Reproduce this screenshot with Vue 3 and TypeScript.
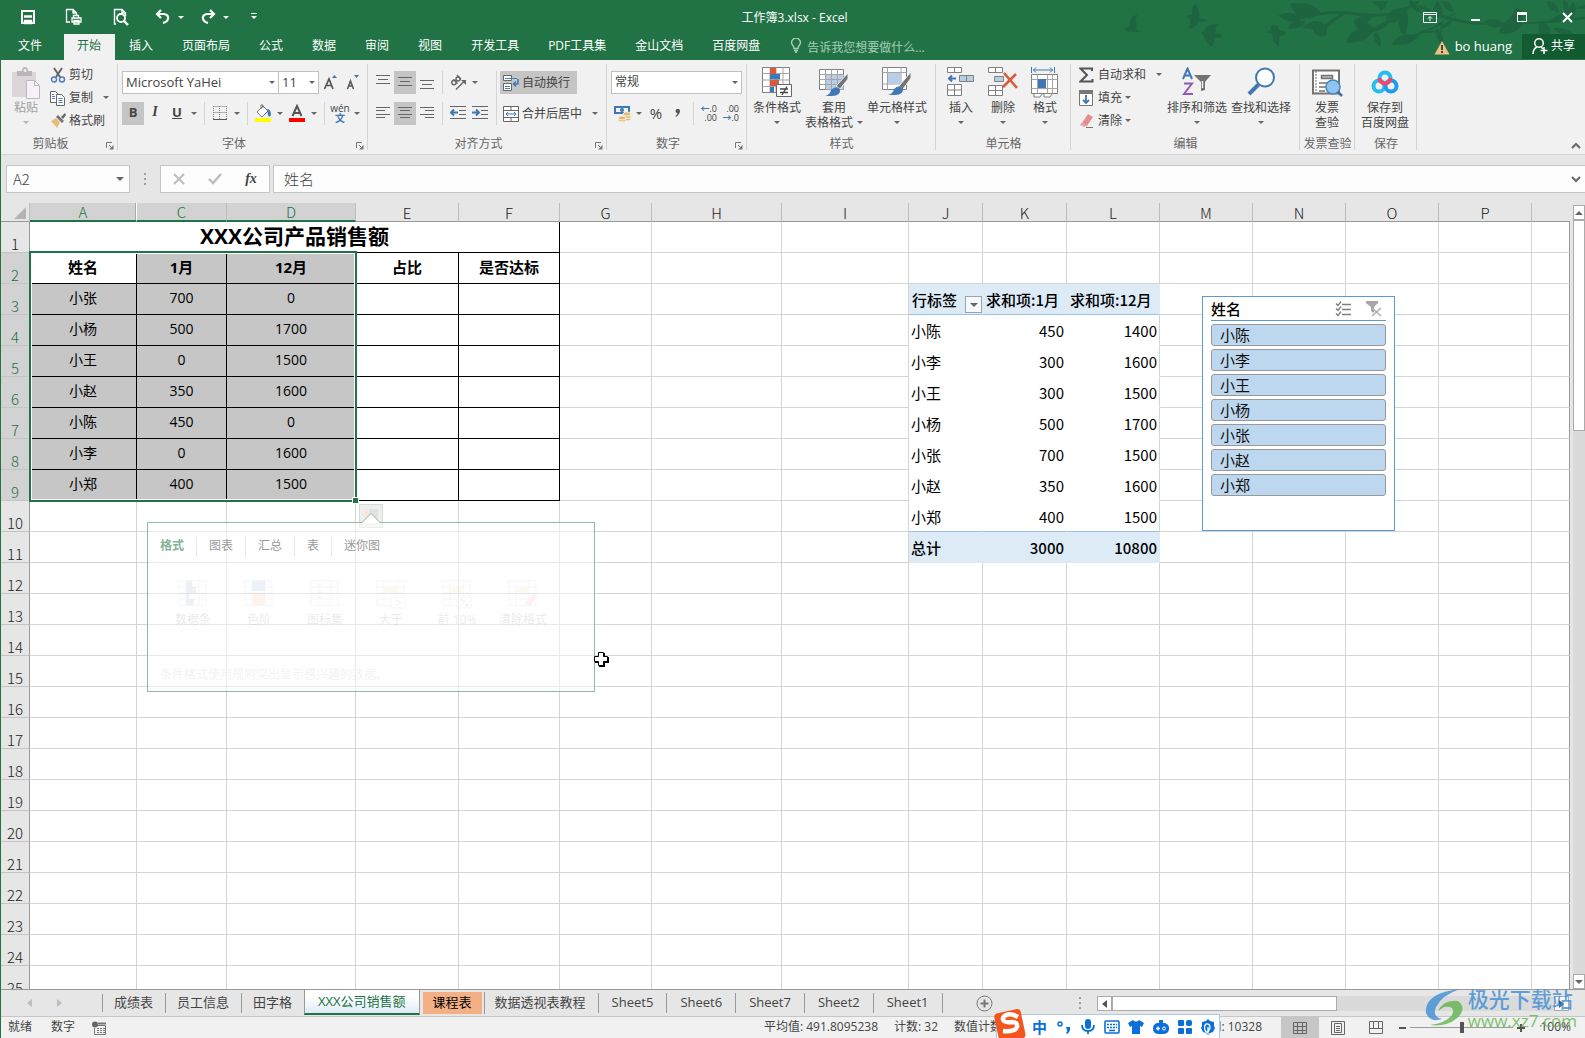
<script setup lang="ts">
import { ref } from 'vue'

interface Cell {
  text: string
  cls: string
  span?: number
}

const ribbonTabs = ['文件', '开始', '插入', '页面布局', '公式', '数据', '审阅', '视图', '开发工具', 'PDF工具集', '金山文档', '百度网盘']
const activeRibbon = ref('开始')

const columns = [
  { name: 'A', width: 107 },
  { name: 'C', width: 90 },
  { name: 'D', width: 129 },
  { name: 'E', width: 103 },
  { name: 'F', width: 101 },
  { name: 'G', width: 92 },
  { name: 'H', width: 130 },
  { name: 'I', width: 127 },
  { name: 'J', width: 74 },
  { name: 'K', width: 84 },
  { name: 'L', width: 93 },
  { name: 'M', width: 93 },
  { name: 'N', width: 93 },
  { name: 'O', width: 93 },
  { name: 'P', width: 93 },
  { name: '', width: 0 },
]
const selectedColumns = ['A', 'C', 'D']

const sales: string[][] = [
  ['姓名', '1月', '12月', '占比', '是否达标'],
  ['小张', '700', '0', '', ''],
  ['小杨', '500', '1700', '', ''],
  ['小王', '0', '1500', '', ''],
  ['小赵', '350', '1600', '', ''],
  ['小陈', '450', '0', '', ''],
  ['小李', '0', '1600', '', ''],
  ['小郑', '400', '1500', '', ''],
]

const pivot: string[][] = [
  ['行标签', '求和项:1月', '求和项:12月'],
  ['小陈', '450', '1400'],
  ['小李', '300', '1600'],
  ['小王', '300', '1500'],
  ['小杨', '500', '1700'],
  ['小张', '700', '1500'],
  ['小赵', '350', '1600'],
  ['小郑', '400', '1500'],
  ['总计', '3000', '10800'],
]

function buildRow(row: number): Cell[] {
  const cells: Cell[] = []
  columns.forEach((col, i) => {
    if (row === 1 && i < 5) {
      if (i === 0) cells.push({ text: 'XXX公司产品销售额', cls: 'sales title', span: 5 })
      return
    }
    if (row >= 2 && row <= 9 && i < 5) {
      const head = row === 2 ? ' head' : ''
      const picked = i < 3 && !(row === 2 && i === 0) ? ' picked' : ''
      cells.push({ text: sales[row - 2][i], cls: 'sales' + head + picked })
      return
    }
    if (row >= 3 && row <= 11 && i >= 8 && i <= 10) {
      const part = row === 3 ? ' phead' : row === 11 ? ' ptotal' : row === 10 ? ' plast' : ''
      cells.push({ text: pivot[row - 3][i - 8], cls: 'pivot' + part + (i > 8 ? ' num' : '') + (i === 10 ? ' edge' : '') })
      return
    }
    cells.push({ text: '', cls: '' })
  })
  return cells
}
const rows = Array.from({ length: 25 }, (_, i) => ({ n: i + 1, cells: buildRow(i + 1) }))

const slicerItems = ['小陈', '小李', '小王', '小杨', '小张', '小赵', '小郑']
const quickTabs = ['格式', '图表', '汇总', '表', '迷你图']
const quickItems = [
  { label: '数据条', kind: 'bars' },
  { label: '色阶', kind: 'scale' },
  { label: '图标集', kind: 'set' },
  { label: '大于', kind: 'greater' },
  { label: '前 10%', kind: 'percent' },
  { label: '清除格式', kind: 'clear' },
]
const sheets = ['成绩表', '员工信息', '田字格', 'XXX公司销售额', '课程表', '数据透视表教程', 'Sheet5', 'Sheet6', 'Sheet7', 'Sheet2', 'Sheet1']
const activeSheet = ref('XXX公司销售额')
</script>

<template>
  <div class="app">
    <header class="top">
      <svg class="branches" width="475" height="60" viewBox="0 0 1425 180" fill="#1e6440" aria-hidden="true">
        <path d="M42 86q16-2 18-20 2-18 22-22-8 18-2 30 2 8-2 14l16 6-20 2-12-2-8 4z" />
        <path d="M226 50l14-6 8 2q-6-26 8-34 14 18 12 34l-2 8 24 6-2 4-22 2q-12 18-30 20 6-14 4-24-2-10-14-12z" />
        <path d="M274 98l12-8q-2-16 42-18-14 12-12 26l18 6v8l-18 2q-8 16-8 26-20-8-24-28z" />
        <path d="M467 98l14-8q0-14 12-16 14 2 14 16l18 4v10l-14 4q-8 18-2 30-22-8-22-30l-4-8z" />
        <path d="M506 46q30-14 62 0l8 8-8 10q-40 8-62-18zM540 10q46-6 52 42-40 0-52-42zM566 8q46 0 70 34l-40 14zM532 86q8-28 54-22-10 26-54 22zM574 84q30-28 62-18 22 18 12 42-30 8-40-20z" />
        <path d="M574 50q80-24 160-14 60 10 110 2 50-18 80-36l6 4q-48 34-88 40-60 8-112 0-80-12-150 10z" />
        <path d="M640 78q30-30 68-42l4 4q-30 16-62 44zM730 66q20-26 56-14-18 30-56 14zM730 66q28-14 68 22l-22 2q-30 10-46-24zM710 128q6-48 84-44-20 46-84 44zM790 100l12-2q16 22 8 42-20-14-20-40zM780 88q50-20 70-48l6 2q-20 44-66 54z" />
        <path d="M826 54q20-34 60-30 18 30-2 84-22-20-18-44-18 12-40-10zM784 4h48q-4 26-22 28l-2-10zM898 0q26 6 34 38-34-6-34-38z" />
        <path d="M844 134q20-36 66-30l60-24 60-36 8 4q-40 32-92 46 20-4 50 0l-2 4q-40-2-64 4-24 40-86 32zM978 84q30 22 20 52-24-18-20-52zM988 90q50-20 48-50-28 0-48 50z" />
        <path d="M930 14q120 62 240 54 90 4 255-18v8q-160 20-255 14-130 14-250-52zM992 4q38 0 38 34-24-6-38-34zM970 24l12-22q22 20 14 52-20-8-26-30z" />
        <path d="M1120 66q32-20 62 4 26-20 38-50 30 20 14 44l4 12q-30 34-70 24 0-16 10-22-30 12-58-12zM1288 66q46 6 30 58-38-14-30-58zM1308 4q34-2 38 34-26-4-38-34zM1360 0q20 6 14 30l16-26q16 26-4 50-30-6-26-54z" />
        <path d="M1310 66q70-46 115-40v-12q-30 8-45 28-20 20-70 24zM1330 84q40-4 60 20-42 6-60-20z" />
      </svg>
      <div class="titlebar">
        <nav class="qat" aria-label="快速访问">
          <button class="q1" aria-label="保存">
            <svg width="16" height="16" viewBox="0 0 16 16" fill="none" stroke="#fff" stroke-width="2"><path d="M2 2h12v12H2z" /><path d="M4 7.500h8M5 12h6v2H5z" stroke-width="2.400" /></svg>
          </button>
          <button class="q2" aria-label="打印">
            <svg width="18" height="18" viewBox="0 0 18 18" fill="none" stroke="#fff" stroke-width="1.300"><path d="M5 14H1.500V1.500H8L11.500 5v2M8 1.500V5h3.500M7 14v-4h9v4zM8.500 10V7.500h5V10M9 12.500h5V16H9z" /></svg>
          </button>
          <button class="q2" aria-label="预览">
            <svg width="16" height="18" viewBox="0 0 16 18" fill="none" stroke="#fff"><path d="M3 16H1.500V1.500H9L12.500 5v3M9 1.500V5h3.500" stroke-width="1.400" /><circle cx="8" cy="10" r="4" stroke-width="1.800" /><path d="M11 13l4 4" stroke-width="2.400" /></svg>
          </button>
          <button class="q3" aria-label="撤销">
            <svg width="16" height="16" viewBox="0 0 16 16" fill="none" stroke="#fff" stroke-width="2.200"><path d="M6 1L2 5l4 4M2 5h7q5 1 4 5-1 3-5 4" /></svg>
            <i class="caret light"></i>
          </button>
          <button class="q3" aria-label="恢复">
            <svg width="16" height="16" viewBox="0 0 16 16" fill="none" stroke="#fff" stroke-width="2.200"><path d="M10 1l4 4-4 4M14 5H7q-5 1-4 5 1 3 5 4" /></svg>
            <i class="caret light"></i>
          </button>
          <button class="q4" aria-label="自定义">
            <svg width="8" height="8" viewBox="0 0 8 8" fill="#fff"><path d="M1 0h6v1H1zM1 3h6L4 6z" /></svg>
          </button>
        </nav>
        <h1>工作簿3.xlsx - Excel</h1>
        <div class="winbtns">
          <button aria-label="功能区显示选项"><svg width="14" height="11" viewBox="0 0 14 11" fill="none" stroke="#fff"><path d="M.5.5h13v10H.5zM.5 2.500h13M7 9V5M5 6.500L7 4.500l2 2" /></svg></button>
          <button aria-label="最小化"><svg width="10" height="11" viewBox="0 0 10 11"><path d="M0 7h9v2H0z" fill="#fff" /></svg></button>
          <button aria-label="最大化"><svg width="11" height="11" viewBox="0 0 11 11" fill="none" stroke="#fff"><path d="M.5.5h9v9H.5z" /><path d="M0 1.500h10" stroke-width="3" /></svg></button>
          <button aria-label="关闭"><svg width="11" height="11" viewBox="0 0 11 11" stroke="#fff" stroke-width="2"><path d="M1 1l9 9M10 1l-9 9" /></svg></button>
        </div>
      </div>
      <div class="tabrow">
        <button v-for="t in ribbonTabs" :key="t" class="rtab" :class="{ on: t === activeRibbon, file: t === '文件' }" @click="activeRibbon = t">{{ t }}</button>
        <label class="tell">
          <svg width="12" height="15" viewBox="0 0 12 15" fill="none" stroke="#a6cdb6" stroke-width="1.400"><path d="M4 10.500q0-2-1.500-3.500a4.300 4.300 0 1 1 7 0Q8 8.500 8 10.500zM4 12.500h4M5 14.300h2" /></svg>
          <input type="text" placeholder="告诉我您想要做什么..." aria-label="告诉我您想要做什么" />
        </label>
        <div class="account">
          <svg width="16" height="15" viewBox="0 0 16 15"><path d="M8 1l7.500 13.500H.5z" fill="#eac282" /><path d="M7 5h2v5H7zM7 11h2v2H7z" fill="#444" /></svg>
          <a href="#">bo huang</a>
          <button class="share">
            <svg width="16" height="18" viewBox="0 0 16 18" fill="none" stroke="#fff" stroke-width="1.500"><circle cx="7" cy="6" r="4.300" /><path d="M1 17q0-5 4-7M9 10l2 2M12 10v7M8.500 13.500h7" /></svg>
            共享
          </button>
        </div>
      </div>
    </header>

    <section class="ribbon" aria-label="开始">
      <div class="group g-clip">
        <div class="body">
          <button class="big paste">
            <span class="pic"><svg width="28" height="32" viewBox="0 0 28 32"><path d="M0 5h24v25H0z" fill="#dcd6da" /><path d="M5 4h5q0-4 3-4t3 4h4v5H5z" fill="#b9b5b8" /><circle cx="13" cy="3.500" r="1.500" fill="#f1f1f1" /><path d="M14.500 13.500h8l5 5v13h-13z" fill="#f6f0f8" stroke="#bcb8bc" /><path d="M22.500 13.500v5h5" fill="none" stroke="#bcb8bc" /></svg></span>
            <span>粘贴</span><span><i class="caret pale"></i></span>
          </button>
          <div class="stack">
            <button><svg width="16" height="16" viewBox="0 0 16 16" fill="none"><path d="M4 1l6 9M12 1L6 10" stroke="#666" stroke-width="2" /><circle cx="4" cy="12.500" r="2.500" stroke="#4a7ebb" stroke-width="1.400" /><circle cx="12" cy="12.500" r="2.500" stroke="#4a7ebb" stroke-width="1.400" /></svg><span>剪切</span></button>
            <button><svg width="16" height="16" viewBox="0 0 16 16" fill="#fff" stroke="#666"><path d="M.5 1.500h5l3 3v8h-8z" /><path d="M6.500 4.500h5l3 3v8h-8z" /><path d="M2 4.500h2M2 6.500h3M2 8.500h3M8.500 8.500h4M8.500 10.500h4M8.500 12.500h4" stroke="#4a7ebb" /></svg><span>复制</span><i class="caret far"></i></button>
            <button><svg width="16" height="16" viewBox="0 0 16 16"><path d="M1 8l5-3 4 4-3 6z" fill="#e8bd7c" /><path d="M6 4l2-2 6 6-2 2z" fill="#777" /><path d="M11 4l4-4 1 2-3 4z" fill="#666" /></svg><span>格式刷</span></button>
          </div>
        </div>
        <footer>剪贴板<svg class="launch" width="8" height="8" viewBox="0 0 8 8"><path d="M.5 6V.5H6M3 3l3 3" fill="none" stroke="#777" /><path d="M7.500 3v4.500H3z" fill="#777" /></svg></footer>
      </div>

      <div class="group g-font">
        <div class="tools">
          <div class="line">
            <span class="combo fontname"><select aria-label="字体"><option>Microsoft YaHei</option></select><i class="caret"></i></span>
            <span class="combo fontsize"><select aria-label="字号"><option>11</option></select><i class="caret"></i></span>
            <button class="ic" aria-label="增大字号"><svg width="14" height="16" viewBox="0 0 14 16"><path d="M1.500 15L6 5l4 10M3 11.500h5.500" fill="none" stroke="#555" stroke-width="1.700" /><path d="M9 4l2.500-3L14 4z" fill="#3f78b5" /></svg></button>
            <button class="ic" aria-label="减小字号"><svg width="14" height="16" viewBox="0 0 14 16"><path d="M2.500 15l3-8 3 8M3.500 12h4" fill="none" stroke="#555" stroke-width="1.500" /><path d="M9 1l2.500 3L14 1z" fill="#3f78b5" /></svg></button>
          </div>
          <div class="line">
            <button class="ic on"><b>B</b></button>
            <button class="ic"><i class="it">I</i></button>
            <button class="ic"><b><u>U</u></b></button>
            <button class="dd" aria-label="下划线"><i class="caret"></i></button>
            <span class="sep"></span>
            <button class="ic" aria-label="边框"><svg width="14" height="14" viewBox="0 0 14 14" fill="none" stroke="#777"><path d="M.5.5h13M.5 6.500h13M.5 0v13M6.500 0v13M13.500 0v13" stroke-dasharray="1 1" /><path d="M0 13.500h14" stroke="#555" /></svg></button>
            <button class="dd" aria-label="边框选项"><i class="caret"></i></button>
            <span class="sep"></span>
            <button class="ic" aria-label="填充颜色"><svg width="16" height="18" viewBox="0 0 16 18"><path d="M2 8l6-6 5 5-6 6z" fill="#fff" stroke="#777" /><path d="M6 5V1h2v3" fill="none" stroke="#777" /><path d="M12 5q4 0 4 6-2 3-3 0z" fill="#3f78b5" /><path d="M0 14h16v4H0z" fill="#ff0" /></svg></button>
            <button class="dd" aria-label="填充选项"><i class="caret"></i></button>
            <button class="ic" aria-label="字体颜色"><svg width="16" height="18" viewBox="0 0 16 18"><path d="M3.500 12L8 2l4.500 10M5 9h6" fill="none" stroke="#555" stroke-width="2" /><path d="M0 14h16v4H0z" fill="red" /></svg></button>
            <button class="dd" aria-label="字体颜色选项"><i class="caret"></i></button>
            <span class="sep"></span>
            <button class="ic wen"><span>wén</span><span class="blue">文</span></button>
            <button class="dd" aria-label="拼音选项"><i class="caret"></i></button>
          </div>
        </div>
        <footer>字体<svg class="launch" width="8" height="8" viewBox="0 0 8 8"><path d="M.5 6V.5H6M3 3l3 3" fill="none" stroke="#777" /><path d="M7.500 3v4.500H3z" fill="#777" /></svg></footer>
      </div>

      <div class="group g-align">
        <div class="split">
          <div class="tools">
            <div class="line">
              <button class="ic" aria-label="顶端对齐"><svg width="14" height="14" viewBox="0 0 14 14" stroke="#666"><path d="M0 .5h14M2 4.500h10M0 8.500h14" /></svg></button>
              <button class="ic on" aria-label="垂直居中"><svg width="14" height="14" viewBox="0 0 14 14" stroke="#666"><path d="M0 2.500h14M2 6.500h10M0 10.500h14" /></svg></button>
              <button class="ic" aria-label="底端对齐"><svg width="14" height="14" viewBox="0 0 14 14" stroke="#666"><path d="M0 5.500h14M2 9.500h10M0 13.500h14" /></svg></button>
              <span class="sep"></span>
              <button class="ic" aria-label="方向"><svg width="17" height="17" viewBox="0 0 17 17"><g fill="none" stroke="#666" stroke-width="1.400"><circle cx="4" cy="8.500" r="2.200" /><path d="M3.500 5.500l4 4M7 1l4 4.500" /><circle cx="8" cy="5" r="2" /><path d="M6 15.500l8-8" /></g><path d="M11 6h5v5z" fill="#666" /></svg></button>
              <button class="dd" aria-label="方向选项"><i class="caret"></i></button>
            </div>
            <div class="line">
              <button class="ic" aria-label="左对齐"><svg width="14" height="14" viewBox="0 0 14 14" stroke="#666"><path d="M0 1.500h14M0 4.500h9M0 8.500h14M0 11.500h9" /></svg></button>
              <button class="ic on" aria-label="居中"><svg width="14" height="14" viewBox="0 0 14 14" stroke="#666"><path d="M0 1.500h14M2 4.500h10M0 8.500h14M2 11.500h10" /></svg></button>
              <button class="ic" aria-label="右对齐"><svg width="14" height="14" viewBox="0 0 14 14" stroke="#666"><path d="M0 1.500h14M5 4.500h9M0 8.500h14M5 11.500h9" /></svg></button>
              <span class="sep"></span>
              <button class="ic" aria-label="减少缩进"><svg width="16" height="14" viewBox="0 0 16 14" fill="none" stroke="#666"><path d="M0 .5h16M9 4.500h7M9 8.500h7M0 12.500h16" /><path d="M8 6.500H1M4 3.500l-3 3 3 3" stroke="#3f78b5" stroke-width="2" /></svg></button>
              <button class="ic" aria-label="增加缩进"><svg width="16" height="14" viewBox="0 0 16 14" fill="none" stroke="#666"><path d="M0 .5h16M9 4.500h7M9 8.500h7M0 12.500h16" /><path d="M0 6.500h7M4 3.500l3 3-3 3" stroke="#3f78b5" stroke-width="2" /></svg></button>
            </div>
          </div>
          <div class="tools wraps">
            <div class="line">
              <button class="txt on"><svg width="16" height="16" viewBox="0 0 16 16" fill="none"><path d="M.5.500h8v5h-8zM.5 8.500h8v7h-8z" fill="#fff" stroke="#666" /><path d="M2 3.500h12M2 11.500h5M2 13.500h5" stroke="#4a7ebb" /><path d="M15 4v5h-4M13 6.500L10.500 9l2.500 2.500" stroke="#3f78b5" stroke-width="1.500" /></svg>自动换行</button>
            </div>
            <div class="line">
              <button class="txt"><svg width="16" height="16" viewBox="0 0 16 16" fill="#fff" stroke="#666"><path d="M.5.500h15v15H.5zM.5 4.500h15M.5 11.500h15M8 .5v4M8 11.500v4" /><path d="M3 8h10M5 6L3 8l2 2M11 6l2 2-2 2" fill="none" stroke="#3f78b5" /></svg>合并后居中</button>
              <button class="dd" aria-label="合并选项"><i class="caret"></i></button>
            </div>
          </div>
        </div>
        <footer>对齐方式<svg class="launch" width="8" height="8" viewBox="0 0 8 8"><path d="M.5 6V.5H6M3 3l3 3" fill="none" stroke="#777" /><path d="M7.500 3v4.500H3z" fill="#777" /></svg></footer>
      </div>

      <div class="group g-num">
        <div class="tools">
          <div class="line"><span class="combo numfmt"><select aria-label="数字格式"><option>常规</option></select><i class="caret"></i></span></div>
          <div class="line">
            <button class="ic" aria-label="会计数字格式"><svg width="17" height="17" viewBox="0 0 17 17"><path d="M0 1h16v8H0z" fill="#3f78b5" /><path d="M2 3h12v4H2z" fill="#f1f1f1" /><circle cx="8" cy="5" r="2" fill="#3f78b5" /><g fill="#e9b968" stroke="#f1f1f1"><ellipse cx="13" cy="14" rx="4" ry="2" /><ellipse cx="13" cy="11.500" rx="4" ry="2" /><ellipse cx="13" cy="9" rx="4" ry="2" /><ellipse cx="8" cy="15" rx="4" ry="2" /><ellipse cx="8" cy="13" rx="4" ry="2" /></g></svg></button>
            <button class="dd" aria-label="会计选项"><i class="caret"></i></button>
            <button class="ic pct">%</button>
            <button class="ic" aria-label="千位分隔样式"><svg width="8" height="10" viewBox="0 0 8 10"><path d="M3.500 1a2 2 0 0 1 2.500 2q0 3-4 6l-.5-1q2-1.500 2-3a2 2 0 0 1 0-4z" fill="#555" /></svg></button>
            <span class="sep"></span>
            <button class="ic dec"><span><em>←</em>.0</span><span>.00</span></button>
            <button class="ic dec"><span>.00</span><span><em>→</em>.0</span></button>
          </div>
        </div>
        <footer>数字<svg class="launch" width="8" height="8" viewBox="0 0 8 8"><path d="M.5 6V.5H6M3 3l3 3" fill="none" stroke="#777" /><path d="M7.500 3v4.500H3z" fill="#777" /></svg></footer>
      </div>

      <div class="group g-style">
        <div class="body">
          <button class="big b52">
            <span class="pic"><svg width="30" height="31" viewBox="0 0 30 31"><path d="M.5.500h27v25H.5z" fill="#fff" stroke="#808080" /><path d="M.5 6.500h27M.5 13h27M.5 19.500h27M8 .5v25M14 .5v25M21 .5v25" stroke="#a5a5a5" /><path d="M8 1h6v6H8zM8 13h9v6H8z" fill="#d65a3c" /><path d="M8 7h10v5.500H8zM8 20h4v5H8z" fill="#3f78b5" /><path d="M14.500 17.500h15v12h-15z" fill="#fff" stroke="#666" /><path d="M18 22h8M18 25.500h8M25 19.500l-5 8.500" stroke="#444" stroke-width="1.300" /></svg></span>
            <span>条件格式</span><span><i class="caret"></i></span>
          </button>
          <button class="big b62">
            <span class="pic"><svg width="30" height="30" viewBox="0 0 30 30"><path d="M.5 2.500h24v20H.5z" fill="#fff" stroke="#808080" /><path d="M7 7.500h17.500v15H7z" fill="#b8cde6" /><path d="M.5 7.500h24M.5 12.500h24M.5 17.500h24M6.500 2.500v20M12.500 2.500v20M18.500 2.500v20" stroke="#a5a5a5" /><path d="M29 6v6l-8 10-4-3z" fill="#737373" stroke="#f1f1f1" /><path d="M6 29q5-1 6-6 5-5 9-1 1 7-8 7z" fill="#3f78b5" /></svg></span>
            <span>套用</span><span class="with">表格格式<i class="caret"></i></span>
          </button>
          <button class="big b64">
            <span class="pic"><svg width="30" height="30" viewBox="0 0 30 30"><path d="M.5.500h24v22H.5z" fill="#fff" stroke="#808080" /><path d="M.5 5.500h24M.5 17h24M5.500 .5v22M19 .5v22" stroke="#a5a5a5" /><path d="M6 6h13v11H6z" fill="#b8cde6" /><path d="M29 5v6l-8 11-4-3z" fill="#737373" stroke="#f1f1f1" /><path d="M6 28q5-1 6-6 5-5 9-1 1 7-8 7z" fill="#3f78b5" /></svg></span>
            <span>单元格样式</span><span><i class="caret"></i></span>
          </button>
        </div>
        <footer>样式</footer>
      </div>

      <div class="group g-cells">
        <div class="body">
          <button class="big b42">
            <span class="pic"><svg width="28" height="30" viewBox="0 0 28 30" fill="#fff" stroke="#808080"><path d="M.5.500h14v5H.5zM7.500 .5v5M.5 17.500h14v11H.5zM7.500 17.500v11M.5 23h14" /><path d="M12.500 8.500h14v6h-14zM19.500 8.500v6" fill="#b8cde6" /><path d="M9 11.500H2M5 8.500l-3 3 3 3" fill="none" stroke="#3f78b5" stroke-width="2" /></svg></span>
            <span>插入</span><span><i class="caret"></i></span>
          </button>
          <button class="big b42">
            <span class="pic"><svg width="30" height="30" viewBox="0 0 30 30" fill="#fff" stroke="#808080"><path d="M.5.500h14v5H.5zM7.500 .5v5M.5 18.500h14v10H.5zM7.500 18.500v10M.5 23.500h14" /><path d="M6.500 9.500h9v5h-9z" fill="#b8cde6" /><path d="M16 6l13 15M28 7L15 20" stroke="#d65a3c" stroke-width="2.600" /></svg></span>
            <span>删除</span><span><i class="caret"></i></span>
          </button>
          <button class="big b42">
            <span class="pic"><svg width="28" height="32" viewBox="0 0 28 32" fill="#fff" stroke="#808080"><path d="M.5 7.500h26v19H.5zM3 27v3h6l2-3M13 27v3h6l2-3" /><path d="M.5 12.500h26M.5 21.500h26M6.500 7.500v19M16.500 7.500v19M21.500 7.500v19" stroke="#a5a5a5" /><path d="M7 12h8v9H7z" fill="#3f78b5" stroke="none" /><path d="M.5 0v6M23.500 0v6M2 3h20M5 .5L2.500 3 5 5.500M19 .5L21.500 3 19 5.500" fill="none" stroke="#3f78b5" /></svg></span>
            <span>格式</span><span><i class="caret"></i></span>
          </button>
        </div>
        <footer>单元格</footer>
      </div>

      <div class="group g-edit">
        <div class="body">
          <div class="stack">
            <button><svg width="16" height="16" viewBox="0 0 16 16"><path d="M13 4V1.500H1.500L8 8l-6.500 6.500h12V12" fill="none" stroke="#555" stroke-width="2" /></svg><span>自动求和</span><i class="caret far"></i></button>
            <button><svg width="16" height="16" viewBox="0 0 16 16"><path d="M.5.500h13v15H.5z" fill="#fff" stroke="#777" /><path d="M0 0h14v4H0z" fill="#777" /><path d="M7 5v8M4 10l3 3 3-3" fill="none" stroke="#3f78b5" stroke-width="1.800" /></svg><span>填充</span><i class="caret"></i></button>
            <button><svg width="16" height="16" viewBox="0 0 16 16"><path d="M9 1l5 3-6 9-5-3z" fill="#e58a97" /><path d="M3 9l5 4-3 1-4-2z" fill="#e9a5ae" /><path d="M7 14.500h7" stroke="#777" /></svg><span>清除</span><i class="caret"></i></button>
          </div>
          <button class="big b64">
            <span class="pic"><svg width="30" height="30" viewBox="0 0 30 30" fill="none"><path d="M1 12L5.500 1.500 10 12M3 8.500h5" stroke="#3f78b5" stroke-width="2" /><path d="M2 16.500h8L2 27h9" stroke="#8e5bb5" stroke-width="2" /><path d="M12 8h17l-6 7v8l-4 1v-9z" fill="#737373" /><path d="M20.500 14v7" stroke="#f1f1f1" stroke-width="1.500" /></svg></span>
            <span>排序和筛选</span><span><i class="caret"></i></span>
          </button>
          <button class="big b64">
            <span class="pic"><svg width="30" height="30" viewBox="0 0 30 30"><circle cx="19" cy="10.500" r="9" fill="#fff" stroke="#3f78b5" stroke-width="2" /><path d="M12.500 17.500L3 27" stroke="#3f78b5" stroke-width="4" /></svg></span>
            <span>查找和选择</span><span><i class="caret"></i></span>
          </button>
        </div>
        <footer>编辑</footer>
      </div>

      <div class="group g-inv">
        <div class="body">
          <button class="big b54">
            <span class="pic down"><svg width="32" height="28" viewBox="0 0 32 28"><path d="M2 1.500h26v23H2z" fill="#fff" stroke="#737373" stroke-width="2" /><path d="M5 2v23" stroke="#737373" stroke-dasharray="2 1" /><path d="M10.500 6.500h11v3h-11z" fill="#bbb" stroke="#737373" stroke-width="1.500" /><path d="M8 14h8M8 18h7M8 22h6" stroke="#737373" stroke-width="1.500" /><circle cx="22" cy="18" r="7" fill="#8ec5f2" stroke="#4a86b8" stroke-width="1.500" /><path d="M27 23l4 4" stroke="#4a6f93" stroke-width="2.500" /></svg></span>
            <span>发票</span><span>查验</span>
          </button>
        </div>
        <footer>发票查验</footer>
      </div>

      <div class="group g-save">
        <div class="body">
          <button class="big b60">
            <span class="pic down"><svg width="28" height="28" viewBox="0 0 28 28" fill="none" stroke-width="4"><circle cx="8" cy="17" r="5.500" stroke="#25bdf0" /><circle cx="20" cy="17" r="5.500" stroke="#1d9bf0" /><path d="M8.500 9a5.500 5.500 0 0 1 11 0" stroke="#25bdf0" /><path d="M8.500 9a5.500 5.500 0 0 0 11 0" stroke="#ef476b" /></svg></span>
            <span>保存到</span><span>百度网盘</span>
          </button>
        </div>
        <footer>保存</footer>
      </div>
      <button class="collapse" aria-label="折叠功能区"><svg width="10" height="7" viewBox="0 0 10 7"><path d="M1 6l4-4 4 4" fill="none" stroke="#666" stroke-width="2" /></svg></button>
    </section>

    <section class="formula">
      <div class="namebox"><input type="text" value="A2" aria-label="名称框" /><i class="caret large"></i></div>
      <svg class="grip" width="3" height="13" viewBox="0 0 3 13" fill="#a0a0a0"><path d="M0 0h2v2H0zM0 5h2v2H0zM0 10h2v2H0z" /></svg>
      <div class="fx">
        <button aria-label="取消"><svg width="12" height="12" viewBox="0 0 12 12"><path d="M1 1l10 10M11 1L1 11" stroke="#bdbdbd" stroke-width="2" /></svg></button>
        <button aria-label="输入"><svg width="14" height="12" viewBox="0 0 14 12"><path d="M1 6l4 4 8-9" fill="none" stroke="#bdbdbd" stroke-width="2.400" /></svg></button>
        <button class="fxb">fx</button>
      </div>
      <div class="finput">
        <input type="text" value="姓名" aria-label="编辑栏" />
        <svg width="10" height="7" viewBox="0 0 10 7"><path d="M1 1l4 4 4-4" fill="none" stroke="#666" stroke-width="2" /></svg>
      </div>
    </section>

    <main class="work">
      <div class="grid">
        <div class="sheet">
          <table>
            <colgroup>
              <col class="rowcol" />
              <col v-for="c in columns" :key="c.name" :style="c.width ? { width: c.width + 'px' } : {}" />
            </colgroup>
            <thead>
              <tr>
                <th class="corner"><svg width="12" height="12" viewBox="0 0 12 12"><path d="M12 0v12H0z" fill="#b4b4b4" /></svg></th>
                <th v-for="c in columns" :key="c.name" :class="{ sel: selectedColumns.includes(c.name), hid: c.name === 'A' }">{{ c.name }}</th>
              </tr>
            </thead>
            <tbody>
              <tr v-for="r in rows" :key="r.n">
                <th :class="{ sel: r.n >= 2 && r.n <= 9 }">{{ r.n }}</th>
                <td v-for="(c, i) in r.cells" :key="i" :class="c.cls" :colspan="c.span || 1">{{ c.text }}</td>
              </tr>
            </tbody>
          </table>

          <div class="selection"><span class="handle"></span></div>
          <button class="pfilter" aria-label="筛选行标签"><i class="caret large"></i></button>

          <aside class="slicer">
            <div class="shead">
              <h2>姓名</h2>
              <button aria-label="多选"><svg width="16" height="16" viewBox="0 0 16 16" fill="none" stroke="#808080"><path d="M1 2.500l2 2 3-4M1 7.500l2 2 3-4M1 12.500l2 2 3-4M7 3.500h9M7 8.500h9M7 13.500h9" stroke-width="1.400" /></svg></button>
              <button aria-label="清除筛选器"><svg width="16" height="16" viewBox="0 0 16 16"><path d="M0 0h12v2L8 6v6l-3-2V6L0 2z" fill="#a9a4a9" /><path d="M6 7l9 8M15 7l-9 8" stroke="#b4afb4" stroke-width="1.600" /></svg></button>
            </div>
            <button v-for="s in slicerItems" :key="s" class="sitem">{{ s }}</button>
          </aside>

          <div class="quickbtn">
            <svg width="22" height="22" viewBox="0 0 22 22"><path d="M9 4h9v11H9z" fill="#e2e2e2" /><path d="M7 3L3 10h3l-2 6 6-8H7z" fill="#fbe3cf" /></svg>
          </div>
          <div class="quick">
            <svg class="notch" width="18" height="10" viewBox="0 0 18 10"><path d="M0 10L9 1l9 9z" fill="#fff" /><path d="M0 9.500L9 .5l9 9" fill="none" stroke="#8fbba3" /></svg>
            <div class="qtabs">
              <button v-for="(q, i) in quickTabs" :key="q" :class="{ on: i === 0 }">{{ q }}</button>
            </div>
            <div class="qitems">
              <button v-for="q in quickItems" :key="q.kind">
                <svg width="30" height="30" viewBox="0 0 30 30" fill="none" stroke="#aaa">
                  <path d="M1 1.500h27v25H1zM1 8h27M1 14h27M1 20h27M8 1.500v25M21 1.500v25" />
                  <path v-if="q.kind === 'bars'" d="M8 2h6v6h4v6h-7v6h5v6H8z" fill="#4a7ebb" stroke="none" />
                  <g v-else-if="q.kind === 'scale'" stroke="none"><path d="M8 2h13v10H8z" fill="#4a7ebb" /><path d="M8 14h13v12H8z" fill="#ee9060" /></g>
                  <path v-else-if="q.kind === 'set'" d="M10 5v18" stroke="#ee9060" stroke-dasharray="3 3" stroke-width="2" />
                  <g v-else><path d="M8 8h13v6H8z" fill="#f3c27a" stroke="none" /></g>
                  <g v-if="q.kind === 'greater'"><path d="M15 18h14v11H15z" fill="#fff" /><path d="M20 21l5 3-5 3" stroke="#777" /></g>
                  <g v-if="q.kind === 'percent'"><path d="M15 18h14v11H15z" fill="#fff" /><path d="M25 20l-6 7M19 20h2v2h-2zM24 25h2v2h-2z" stroke="#777" /></g>
                  <path v-if="q.kind === 'clear'" d="M26 14l4 4-9 10-5-3z" fill="#e58a97" stroke="none" />
                </svg>
                <span>{{ q.label }}</span>
              </button>
            </div>
            <p>条件格式使用规则突出显示感兴趣的数据。</p>
          </div>
          <svg class="pointer" width="16" height="16" viewBox="0 0 16 16"><path d="M6 2h6v4h4v6h-4v4H6v-4H2V6h4z" fill="#000" /><path d="M5.500 1.500h5v4h4v5h-4v4h-5v-4h-4v-5h4z" fill="#fff" stroke="#000" /></svg>
        </div>
      </div>
      <div class="vscroll">
        <button aria-label="向上滚动"><i class="caret up"></i></button>
        <div class="vtrack"><div class="vthumb"></div></div>
        <button aria-label="向下滚动"><i class="caret large"></i></button>
      </div>
    </main>

    <nav class="sheetbar" aria-label="工作表">
      <div class="arrows">
        <svg width="6" height="8" viewBox="0 0 6 8"><path d="M5 0v8L0 4z" fill="#bdbdbd" /></svg>
        <svg width="6" height="8" viewBox="0 0 6 8"><path d="M1 0v8l5-4z" fill="#bdbdbd" /></svg>
      </div>
      <button v-for="s in sheets" :key="s" class="stab" :class="{ on: s === activeSheet, orange: s === '课程表', latin: s.startsWith('Sheet') }" @click="activeSheet = s"><span>{{ s }}</span></button>
      <button class="plus" aria-label="新工作表"><svg width="17" height="17" viewBox="0 0 17 17" fill="none" stroke="#777"><circle cx="8.500" cy="8.500" r="7.500" /><path d="M4.500 8.500h8M8.500 4.500v8" stroke-width="2" /></svg></button>
      <svg class="grip" width="3" height="13" viewBox="0 0 3 13" fill="#a0a0a0"><path d="M0 0h2v2H0zM0 5h2v2H0zM0 10h2v2H0z" /></svg>
      <div class="hscroll">
        <button aria-label="向左滚动"><svg width="5" height="8" viewBox="0 0 5 8"><path d="M5 0v8L0 4z" fill="#555" /></svg></button>
        <div class="htrack"><div class="hthumb"></div></div>
        <button aria-label="向右滚动"><svg width="5" height="8" viewBox="0 0 5 8"><path d="M0 0v8l5-4z" fill="#555" /></svg></button>
      </div>
    </nav>

    <footer class="status">
      <span>就绪</span><span>数字</span>
      <svg width="14" height="14" viewBox="0 0 14 14" fill="none" stroke="#777"><path d="M3 4.500h10.500v9H2.500V7M5 7.500h2M8 7.500h2M11 7.500h2M5 9.500h2M8 9.500h2M11 9.500h2M5 11.500h2M8 11.500h2M11 11.500h2" /><path d="M6 2.500h8" stroke-width="2" /><circle cx="3" cy="3.500" r="3" fill="#666" stroke="none" /></svg>
      <div class="stats"><span>平均值: 491.8095238</span><span>计数: 32</span><span>数值计数: 21</span></div>
      <span class="sum">求和: 10328</span>
      <div class="views">
        <button class="on" aria-label="普通"><svg width="14" height="14" viewBox="0 0 14 14" fill="none" stroke="#666"><path d="M.5 1.500h13v11H.5zM.5 5.500h13M.5 9.500h13M4.500 1.500v11M9.500 1.500v11" /></svg></button>
        <button aria-label="页面布局"><svg width="14" height="14" viewBox="0 0 14 14" fill="none" stroke="#666"><path d="M.5.500h13v13H.5zM3.500 2.500h7v9h-7zM5 5.500h4M5 7.500h4M5 9.500h4" /></svg></button>
        <button aria-label="分页预览"><svg width="14" height="14" viewBox="0 0 14 14" fill="none" stroke="#666"><path d="M.5.500h13v12H.5zM4.500 .5v7M9.500 .5v7M.5 7.500h13" /></svg></button>
      </div>
      <div class="zoom">
        <button aria-label="缩小"><svg width="7" height="8" viewBox="0 0 7 8"><path d="M0 3h7v2H0z" fill="#555" /></svg></button>
        <input type="range" min="10" max="190" value="100" aria-label="缩放" />
        <button aria-label="放大"><svg width="8" height="8" viewBox="0 0 8 8"><path d="M0 3h3V0h2v3h3v2H5v3H3V5H0z" fill="#555" /></svg></button>
      </div>
      <span class="pc">100%</span>
    </footer>

    <div class="ime">
      <svg class="slogo" width="34" height="30" viewBox="0 0 34 30"><rect x="3" y="3" width="27" height="30" rx="4" fill="#f2561d" transform="rotate(-12 16 16)" /><path d="M25 9q-7-4-12-2-5 3-2 6 3 2 8 1 6 0 5 5-2 5-14 4" fill="none" stroke="#fff" stroke-width="4.500" /></svg>
      <b>中</b>
      <svg width="16" height="16" viewBox="0 0 16 16"><circle cx="4" cy="5" r="2" fill="none" stroke="#0a6fd6" stroke-width="1.500" /><path d="M10 8h4q1 4-3 7l-1-1q2-2 1-3z" fill="#0a6fd6" /></svg>
      <svg width="14" height="16" viewBox="0 0 14 16"><rect x="4" y="0" width="6" height="10" rx="3" fill="#0a6fd6" /><path d="M1 6q0 6 6 6t6-6M7 12v3" fill="none" stroke="#0a6fd6" stroke-width="1.800" /></svg>
      <svg width="16" height="14" viewBox="0 0 16 14" fill="none" stroke="#0a6fd6" stroke-width="1.600"><rect x="1" y="1" width="14" height="12" rx="1" /><path d="M3 4.500h10M3 7.500h10" stroke-dasharray="2 1" /><path d="M5 10.500h6" /></svg>
      <svg width="16" height="14" viewBox="0 0 16 14"><path d="M5 0q3 3 6 0l5 3-2 4-2-1v8H4V6L2 7 0 3z" fill="#0a6fd6" /></svg>
      <svg width="16" height="15" viewBox="0 0 16 15"><rect x="0" y="4" width="16" height="11" rx="5" fill="#0a6fd6" /><path d="M8 1v4" stroke="#0a6fd6" stroke-width="4" /><path d="M3 9.500h4M5 7.500v4" stroke="#fff" stroke-width="1.300" /><circle cx="11" cy="9.500" r="1.500" fill="none" stroke="#fff" /></svg>
      <svg width="14" height="14" viewBox="0 0 14 14" fill="#0a6fd6"><rect width="6" height="6" rx="1" /><rect x="8" width="6" height="6" rx="2" /><rect y="8" width="6" height="6" rx="1" /><rect x="8" y="8" width="6" height="6" rx="1" /></svg>
      <svg width="14" height="16" viewBox="0 0 14 16"><path d="M7 0l2 2 4 1v4l1 2-2 4-3 1-2 2-2-2-3-1-2-4 1-2V3l4-1z" fill="#0a6fd6" /><path d="M5 13q-3-5 0-8 4-1 4 4l-2 4zM7 8v7" fill="none" stroke="#fff" stroke-width="1.300" /></svg>
    </div>

    <div class="mark" aria-hidden="true">
      <svg width="40" height="40" viewBox="0 0 40 40"><path d="M2 26Q0 6 36 2q-18 6-24 18-4 10 6 12-12 4-16-6z" fill="#3f8fd6" /><path d="M14 24q6-12 20-10 10 8-2 18-10 8-26 6 16-2 22-10 4-10-8-8z" fill="#62b44c" /></svg>
      <div><strong>极光下载站</strong><span>www.xz7.com</span></div>
    </div>
  </div>
</template>

<style>
html,
body {
  margin: 0;
  background: #e6e6e6;
}
</style>

<style scoped>
.app {
  position: relative;
  box-sizing: border-box;
  display: flex;
  flex-direction: column;
  height: 100vh;
  overflow: hidden;
  border-left: 1px solid #217346;
  background: #e6e6e6;
  color: #444;
  font: 12px/16px 'Open Sans', 'Noto Sans CJK SC', sans-serif;
}
.app *,
.app *::before {
  box-sizing: border-box;
}
button,
input,
select {
  margin: 0;
  padding: 0;
  border: 0;
  background: none;
  color: inherit;
  font: inherit;
  border-radius: 0;
  outline: none;
}
button {
  display: flex;
  align-items: center;
  justify-content: center;
  white-space: nowrap;
}
svg {
  flex: none;
  display: block;
}
.caret {
  display: inline-block;
  flex: none;
  width: 0;
  height: 0;
  border: solid transparent;
  border-width: 3px 3px 0;
  border-top-color: #666;
}
.caret.large {
  border-width: 4px 4px 0;
}
.caret.light {
  border-top-color: #fff;
}
.caret.pale {
  border-top-color: #b5b5b5;
}
.caret.up {
  border-width: 0 4px 4px;
  border-bottom-color: #666;
}

/* title bar and tabs */
.top {
  position: relative;
  flex: none;
  background: #217346;
  color: #fff;
}
.branches {
  position: absolute;
  top: 0;
  right: 0;
}
.titlebar {
  position: relative;
  display: flex;
  align-items: center;
  justify-content: space-between;
  height: 34px;
}
.qat {
  display: flex;
  align-items: center;
  flex: 1;
  padding-left: 19px;
  height: 32px;
}
.q1 {
  width: 16px;
  margin-right: 29px;
}
.q2 {
  width: 18px;
  margin-right: 29px;
}
.q3 {
  gap: 7px;
  margin-right: 16px;
}
.q3:nth-child(4) {
  margin-left: -4px;
}
.q4 {
  margin-left: 5px;
}
h1 {
  margin: 0;
  padding: 1px 16px 0 0;
  font-size: 12px;
  font-weight: 400;
}
.winbtns {
  display: flex;
  flex: 1;
  justify-content: flex-end;
  height: 32px;
}
.winbtns button {
  width: 46px;
}
.winbtns button:last-child {
  width: 40px;
  padding-left: 4px;
}
.tabrow {
  position: relative;
  display: flex;
  height: 26px;
}
.rtab {
  padding: 0 15px 2px 14px;
  line-height: 22px;
}
.rtab.file {
  padding: 0 22px 2px 17px;
}
.rtab.on {
  background: #f1f1f1;
  color: #217346;
  padding: 0 14px 2px 13px;
}
.tell {
  display: flex;
  flex: 1;
  gap: 5px;
  padding: 4px 0 0 15px;
}
.tell input {
  width: 130px;
  height: 18px;
}
.tell input::placeholder {
  color: #a6cdb6;
  opacity: 1;
}
.account {
  display: flex;
  align-items: center;
}
.account a {
  margin: 0 10px 3px 5px;
  color: #fff;
  font-size: 13px;
  text-decoration: none;
}
.share {
  align-self: flex-start;
  gap: 3px;
  width: 63px;
  height: 25px;
  padding-bottom: 2px;
  background: #125b31;
}

/* ribbon */
.ribbon {
  position: relative;
  display: flex;
  flex: none;
  height: 95px;
  background: #f1f1f1;
  border-bottom: 1px solid #d4d4d4;
}
.group {
  position: relative;
  display: flex;
  flex: none;
  flex-direction: column;
  padding-top: 3px;
}
.group::before {
  content: '';
  position: absolute;
  top: 4px;
  right: 0;
  width: 1px;
  height: 86px;
  background: #d4d4d4;
}
.g-clip { width: 117px; }
.g-font { width: 250px; }
.g-align { width: 239px; }
.g-num { width: 140px; }
.g-style { width: 189px; }
.g-cells { width: 135px; }
.g-edit { width: 229px; }
.g-inv { width: 55px; }
.g-save { width: 62px; }
.group footer {
  display: flex;
  align-items: center;
  justify-content: center;
  height: 20px;
  padding-top: 1px;
  color: #666;
  white-space: nowrap;
}
.group .launch {
  position: absolute;
  right: 4px;
  bottom: 4px;
}
.g-clip footer,
.g-font footer,
.g-align footer,
.g-num footer {
  padding-right: 18px;
}
.body {
  display: flex;
  height: 70px;
  padding-left: 4px;
}
.g-inv .body,
.g-save .body {
  padding-left: 0;
}
.big {
  flex-direction: column;
  justify-content: flex-start;
  padding-top: 4px;
}
.big span {
  display: flex;
  align-items: center;
  justify-content: center;
  height: 15px;
}
.big .pic {
  height: 33px;
  align-items: flex-start;
}
.big .down {
  padding-top: 2px;
}
.big .with {
  gap: 4px;
}
.paste {
  width: 42px;
  color: #a0a0a0;
}
.b42 { width: 42px; }
.b52 { width: 52px; }
.b54 { width: 54px; }
.b60 { width: 60px; }
.b62 { width: 62px; }
.b64 { width: 64px; }
.stack {
  display: flex;
  flex-direction: column;
}
.g-edit .stack {
  width: 90px;
  padding-left: 4px;
}
.g-clip .stack {
  width: 66px;
  padding-left: 3px;
}
.stack button {
  justify-content: flex-start;
  gap: 3px;
  height: 23px;
}
.stack .far {
  margin-left: 7px;
}
.tools {
  display: flex;
  flex-direction: column;
  gap: 8px;
  height: 70px;
  padding: 8px 0 0 4px;
}
.line {
  display: flex;
  height: 23px;
}
.split {
  display: flex;
}
.split .tools:first-child {
  width: 128px;
}
.wraps {
  position: relative;
}
.wraps::before {
  content: '';
  position: absolute;
  top: 8px;
  left: 0;
  width: 1px;
  height: 54px;
  background: #d4d4d4;
}
.ic {
  width: 22px;
  padding-bottom: 1px;
}
.dd {
  width: 12px;
}
.ic.on,
.txt.on {
  background: #c5c5c5;
}
.ic b {
  padding-bottom: 2px;
  font-size: 13px;
}
.it {
  padding-bottom: 2px;
  font: italic 700 14px/16px 'Liberation Serif', serif;
}
.sep {
  width: 1px;
  margin: 0 4px;
  background: #d4d4d4;
}
.txt {
  gap: 3px;
  padding: 0 7px 0 3px;
}
.combo {
  position: relative;
  display: block;
}
.combo select {
  display: block;
  width: 100%;
  height: 23px;
  padding: 0 16px 2px 3px;
  border: 1px solid #c0c0c0;
  background: #fff;
  appearance: none;
  color: #444;
}
.combo .caret {
  position: absolute;
  right: 4px;
  top: 10px;
}
.fontname { width: 157px; }
.fontname select { font-size: 13px; }
.fontsize { width: 40px; }
.fontsize select { border-left: 0; font-size: 13px; }
.numfmt { width: 131px; }
.wen {
  flex-direction: column;
  font-size: 10px;
  line-height: 10px;
}
.wen .blue {
  color: #3f78b5;
  font-weight: 700;
}
.pct {
  font-size: 15px;
}
.dec {
  flex-direction: column;
  align-items: flex-end;
  padding-right: 3px;
  font-size: 9px;
  line-height: 9px;
}
.dec em {
  color: #3f78b5;
  font-style: normal;
  font-weight: 700;
}
.collapse {
  position: absolute;
  right: 4px;
  bottom: 5px;
}

/* formula bar */
.formula {
  display: flex;
  flex: none;
  align-items: center;
  height: 44px;
  padding: 4px 0 0 5px;
}
.namebox,
.fx,
.finput {
  display: flex;
  align-items: center;
  height: 28px;
  border: 1px solid #c6c6c6;
  background: #fdfdfd;
}
.namebox {
  width: 124px;
  padding: 0 5px 0 6px;
}
.namebox input,
.finput input {
  flex: 1;
  min-width: 0;
  height: 26px;
  padding-bottom: 2px;
  font: 15px/24px 'Noto Sans CJK SC', sans-serif;
  font-weight: 300;
}
.formula .grip {
  margin: 0 13px 0 14px;
}
.fx {
  width: 110px;
}
.fx button {
  width: 36px;
  height: 26px;
}
.fxb {
  font: italic 700 14px/20px 'Liberation Serif', serif;
}
.finput {
  flex: 1;
  margin-left: 3px;
  padding: 0 4px 0 10px;
  border-right: 0;
}

/* worksheet */
.work {
  display: flex;
  flex: 1;
  min-height: 0;
}
.grid {
  flex: 1;
  min-width: 0;
  padding-top: 4px;
  overflow: hidden;
}
.sheet {
  position: relative;
}
table {
  width: 100%;
  table-layout: fixed;
  border-spacing: 0;
  background: #fff;
}
.rowcol {
  width: 29px;
}
th {
  padding: 0;
  color: #222;
  font: 15px/17px 'Noto Sans CJK SC', sans-serif;
  font-weight: 300;
}
thead th {
  height: 19px;
  background: #e6e6e6;
  border-right: 1px solid #bdbdbd;
  border-bottom: 1px solid #999;
}
thead th:last-child {
  border-right: 0;
}
thead th.sel {
  background: #d2d2d2;
  color: #217346;
  border-bottom: 2px solid #217346;
  line-height: 16px;
}
thead th.hid {
  border-right-color: #fff;
  box-shadow: inset -1px 0 0 #aaa;
}
thead .corner {
  vertical-align: bottom;
}
.corner svg {
  margin: 0 3px 2px auto;
}
tbody th {
  height: 31px;
  background: #e6e6e6;
  border-right: 1px solid #999;
  border-bottom: 1px solid #c4c4c4;
  vertical-align: bottom;
  line-height: 16px;
}
tbody th.sel {
  background: #d2d2d2;
  color: #217346;
}
td {
  height: 31px;
  padding: 0;
  border-right: 1px solid #d4d4d4;
  border-bottom: 1px solid #d4d4d4;
  color: #000;
  font-size: 14px;
  line-height: 20px;
  white-space: nowrap;
}
td:last-child {
  border-right-color: #999;
}
.sales {
  padding-bottom: 2px;
  border-color: #000;
  text-align: center;
}
.title {
  font-size: 21px;
  font-weight: 700;
  line-height: 28px;
}
.head {
  font-size: 15px;
  font-weight: 700;
}
.picked {
  background: #c6c6c6;
}
.pivot {
  padding: 2px 2px 0;
  border-color: #fff;
  font: 15px/20px 'Noto Sans CJK SC', sans-serif;
}
.pivot.num {
  text-align: right;
}
.pivot.edge {
  border-right-color: #d4d4d4;
}
.pivot.phead,
.pivot.ptotal {
  background: #ddebf7;
  border-color: #ddebf7;
  font-weight: 500;
}
.pivot.phead {
  padding-left: 3px;
  border-bottom-color: #9bc2e6;
  text-align: left;
}
.pivot.plast {
  border-bottom-color: #9bc2e6;
}
.selection {
  position: absolute;
  left: 28px;
  top: 48px;
  width: 328px;
  height: 251px;
  border: 2px solid #217346;
  box-shadow: inset 0 0 0 1px #fff;
}
.handle {
  position: absolute;
  right: -4px;
  bottom: -4px;
  width: 7px;
  height: 7px;
  border: 1px solid #fff;
  background: #217346;
}
.pfilter {
  position: absolute;
  left: 964px;
  top: 93px;
  width: 17px;
  height: 17px;
  border: 1px solid #9aa3b0;
  background: #f7f8fa;
}
.slicer {
  position: absolute;
  left: 1201px;
  top: 93px;
  display: flex;
  flex-direction: column;
  gap: 3px;
  width: 193px;
  height: 235px;
  padding: 0 8px;
  border: 1px solid #5b9bd5;
  background: #fff;
}
.shead {
  display: flex;
  align-items: center;
  gap: 15px;
  height: 24px;
  padding-right: 4px;
  border-bottom: 1px solid #5b9bd5;
}
.slicer h2 {
  flex: 1;
  margin: 0;
  color: #000;
  font: 500 15px/22px 'Noto Sans CJK SC', sans-serif;
}
.sitem {
  justify-content: flex-start;
  height: 22px;
  padding: 0 0 1px 8px;
  border: 1px solid #999;
  border-radius: 3px;
  background: #bdd7ee;
  color: #111;
  font: 15px/20px 'Noto Sans CJK SC', sans-serif;
}
.quickbtn {
  position: absolute;
  left: 358px;
  top: 301px;
  width: 24px;
  height: 24px;
  border: 1px solid #cfe0d6;
  background: #eee;
}
.quick {
  position: absolute;
  left: 146px;
  top: 319px;
  display: flex;
  flex-direction: column;
  width: 448px;
  height: 170px;
  border: 1px solid #8fbba3;
  background: rgba(255, 255, 255, 0.5);
}
.notch {
  position: absolute;
  left: 214px;
  top: -10px;
}
.qtabs {
  display: flex;
  padding-top: 13px;
}
.qtabs button {
  height: 20px;
  padding: 0 12px;
  border-right: 1px solid #e8e8e8;
  color: #999;
}
.qtabs button:last-child {
  border: 0;
}
.qtabs .on {
  color: #83b398;
  font-weight: 700;
}
.qitems {
  display: flex;
  padding: 23px 0 0 12px;
  opacity: 0.1;
}
.qitems button {
  flex-direction: column;
  gap: 3px;
  width: 66px;
}
.quick p {
  margin: auto 0 8px 12px;
  color: #f3f3f3;
}
.pointer {
  position: absolute;
  left: 592px;
  top: 448px;
}
.vscroll {
  display: flex;
  flex-direction: column;
  width: 15px;
  padding: 6px 0 0 3px;
}
.vscroll button {
  height: 15px;
  border: 1px solid #ababab;
  background: #fff;
}
.vtrack {
  flex: 1;
  background: #dadada;
}
.vthumb {
  height: 28%;
  border: 1px solid #ababab;
  background: #fff;
}

/* sheet tabs */
.sheetbar {
  display: flex;
  flex: none;
  height: 28px;
  border-top: 1px solid #999;
  border-bottom: 1px solid #c6c6c6;
}
.arrows {
  display: flex;
  align-items: center;
  gap: 23px;
  width: 102px;
  margin: 4px 0;
  padding-left: 26px;
  border-right: 1px solid #999;
}
.stab {
  height: 20px;
  margin-top: 3px;
  padding: 0 12px 3px 11px;
  border-right: 1px solid #999;
  font-size: 13px;
}
.stab.latin {
  padding: 0 13px 3px;
}
.stab:nth-of-type(3) {
  border-right: 0;
}
.stab.on {
  height: 25px;
  margin-top: 0;
  padding: 0 13px 2px;
  border: 1px solid #999;
  border-top: 0;
  border-bottom: 2px solid #217346;
  background: linear-gradient(#fff 30%, #dfeaf6);
  color: #217346;
}
.stab.orange {
  height: 22px;
  margin: 2px 2px 0 3px;
  padding: 0 10px 2px;
  border: 0;
  background: #f4b084;
  color: #000;
  box-shadow: 2px 0 0 #e6e6e6, 3px 0 0 #999;
}
.plus {
  margin-left: 33px;
}
.sheetbar .grip {
  margin: 7px 15px 0 auto;
}
.hscroll {
  display: flex;
  width: 472px;
  height: 15px;
  margin: 6px 16px 0 0;
}
.hscroll button {
  width: 15px;
  border: 1px solid #ababab;
  background: #fff;
}
.htrack {
  flex: 1;
  background: #dadada;
}
.hthumb {
  width: 51%;
  height: 15px;
  border: 1px solid #ababab;
  background: #fff;
}

/* status bar */
.status {
  display: flex;
  flex: none;
  align-items: center;
  height: 21px;
  padding: 0 14px 0 7px;
  background: #f1f1f1;
  white-space: nowrap;
}
.status > span,
.stats {
  padding-bottom: 2px;
}
.status > span:nth-child(2) {
  margin: 0 17px 0 19px;
}
.stats {
  display: flex;
  flex: 1;
  justify-content: flex-end;
  gap: 16px;
}
.status .sum {
  width: 240px;
  text-align: right;
}
.views {
  display: flex;
  margin-left: 19px;
}
.views button {
  width: 38px;
  height: 21px;
}
.views .on {
  background: #c6c6c6;
}
.zoom {
  display: flex;
  align-items: center;
  width: 130px;
  padding-left: 4px;
}
.zoom input {
  flex: 1;
  min-width: 0;
  height: 16px;
  margin: 0 4px;
  appearance: none;
  background: linear-gradient(#999, #999) center / 100% 1px no-repeat;
}
.zoom input::-webkit-slider-thumb {
  appearance: none;
  width: 4px;
  height: 11px;
  background: #555;
}
.pc {
  width: 46px;
  text-align: right;
}
.ime {
  position: absolute;
  right: 365px;
  bottom: 0;
  display: flex;
  align-items: center;
  justify-content: space-between;
  width: 224px;
  height: 24px;
  padding: 0 4px 0 35px;
  border: 1px solid #a9c9ec;
  border-bottom: 0;
  background: #fff;
  color: #0a6fd6;
}
.ime b {
  font-size: 15px;
}
.slogo {
  position: absolute;
  left: -4px;
  bottom: 0;
}
.mark {
  position: absolute;
  right: 8px;
  bottom: 7px;
  display: flex;
  gap: 4px;
  opacity: 0.8;
}
.mark div {
  display: flex;
  flex-direction: column;
}
.mark strong {
  color: #3f8fd6;
  font-size: 21px;
  font-weight: 500;
  line-height: 24px;
}
.mark span {
  color: #62b44c;
  font-size: 17px;
  line-height: 20px;
}
</style>
